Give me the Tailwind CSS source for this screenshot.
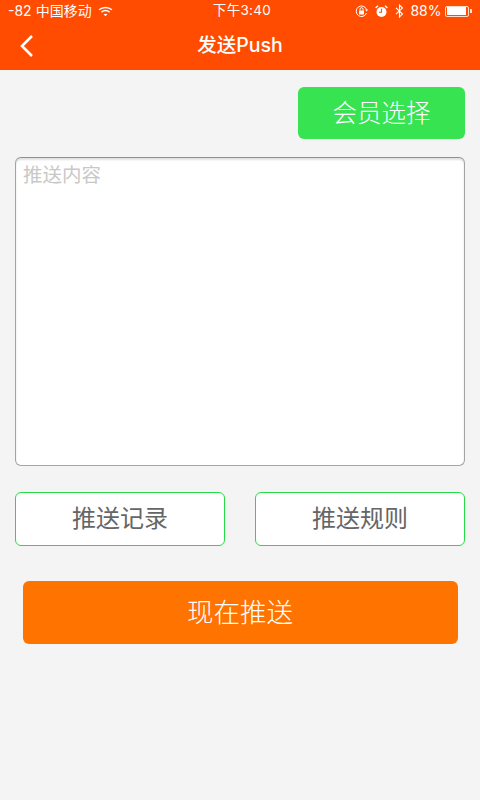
<!DOCTYPE html>
<html lang="zh"><head><meta charset="utf-8"><script src="https://cdn.jsdelivr.net/npm/@tailwindcss/browser@4"></script></head>
<body class="m-0">
<div class="w-[480px] h-[800px] overflow-hidden bg-[#f4f4f4] flex flex-col font-['Inter','Noto_Sans_CJK_SC',sans-serif]">
  <div class="h-[70px] bg-[#ff4c00] text-white flex flex-col shrink-0">
    <div class="h-[22px] pl-[8px] pr-[8px] flex items-center justify-between text-[14px] leading-none">
      <div class="flex items-center w-[160px]">
        <span>-82</span><span class="ml-[4px] text-[14px]">中国移动</span>
        <svg class="ml-[6px]" width="15" height="11" viewBox="0 0 14 10" fill="none" stroke="white" stroke-width="1.4"><path d="M1 3.4C4.5 .5 9.5 .5 13 3.4"/><path d="M3.2 5.6C5.4 3.8 8.6 3.8 10.8 5.6"/><path d="M7 9.5 5.2 7.6C6.2 6.8 7.8 6.8 8.8 7.6Z" fill="white" stroke="none"/></svg>
      </div>
      <span class="ml-[4px] text-[13.5px] tracking-[0.3px]">下午3:40</span>
      <div class="flex items-center justify-end w-[160px]">
        <svg width="13" height="13" viewBox="0 0 13 13" fill="none" stroke="white" stroke-width="1"><path d="M11.5 8A5.3 5.3 0 1 1 11.5 4.5"/><path d="M10 4.5h3l-1.2 2z" fill="white" stroke="none"/><rect x="4" y="5.5" width="5" height="4" fill="white" stroke="none"/><path d="M5 5.5V4.2a1.5 1.5 0 0 1 3 0v1.3"/></svg>
        <svg class="ml-[7px]" width="13" height="13" viewBox="0 0 13 13"><circle cx="6.5" cy="7" r="5" fill="white"/><path d="M6.5 3.8V7.2H4" stroke="#ff4c00" stroke-width="1.1" fill="none"/><path d="M.6 3 3 .8M12.4 3 10 .8" stroke="white" stroke-width="1.4"/></svg>
        <svg class="ml-[7px]" width="9" height="14" viewBox="0 0 9 14" fill="none" stroke="white" stroke-width="1.1"><path d="M1 3.8 7.5 10 4.5 13V1l3 3L1 10.2"/></svg>
        <span class="ml-[6px] text-[14px]">88%</span>
        <div class="ml-[4px] w-[24px] h-[11px] border border-white/80 rounded-[2px] p-[0.5px]"><div class="w-[90%] h-full bg-white"></div></div>
        <div class="w-[1.5px] h-[4px] bg-white/80 ml-[1px]"></div>
      </div>
    </div>
    <div class="relative flex-1 flex items-center justify-center">
      <svg class="absolute left-[19px] top-[12px]" width="15" height="24" viewBox="0 0 15 24" fill="none" stroke="white" stroke-width="2.6"><path d="M13 2 3 12l10 10"/></svg>
      <span class="text-[19.5px] font-medium leading-none">发送Push</span>
    </div>
  </div>
  <div class="px-[15px] pt-[17px] flex flex-col">
    <div class="flex justify-end">
      <div class="w-[167px] h-[52px] rounded-[6px] bg-[#38e351] text-white text-[24.5px] font-light flex items-center justify-center leading-none">会员选择</div>
    </div>
    <div class="mt-[18px] h-[309px] bg-white rounded-[6px] border border-[#a3a3a3] border-t-[#8f8f8f] shadow-[inset_0_2px_2px_rgba(0,0,0,0.12)] px-[7px] pt-[5px] text-[#c8c8c8] text-[19.5px] leading-[24px]">推送内容</div>
    <div class="mt-[26px] flex justify-between">
      <div class="w-[210px] h-[54px] bg-white rounded-[6px] border border-[#26dc45] text-[#666666] text-[24px] flex items-center justify-center leading-none">推送记录</div>
      <div class="w-[210px] h-[54px] bg-white rounded-[6px] border border-[#26dc45] text-[#666666] text-[24px] flex items-center justify-center leading-none">推送规则</div>
    </div>
    <div class="mx-[7.5px] mt-[35px] h-[63px] bg-[#ff7300] rounded-[6px] text-white text-[26.5px] font-light flex items-center justify-center leading-none">现在推送</div>
  </div>
</div>
</body></html>
